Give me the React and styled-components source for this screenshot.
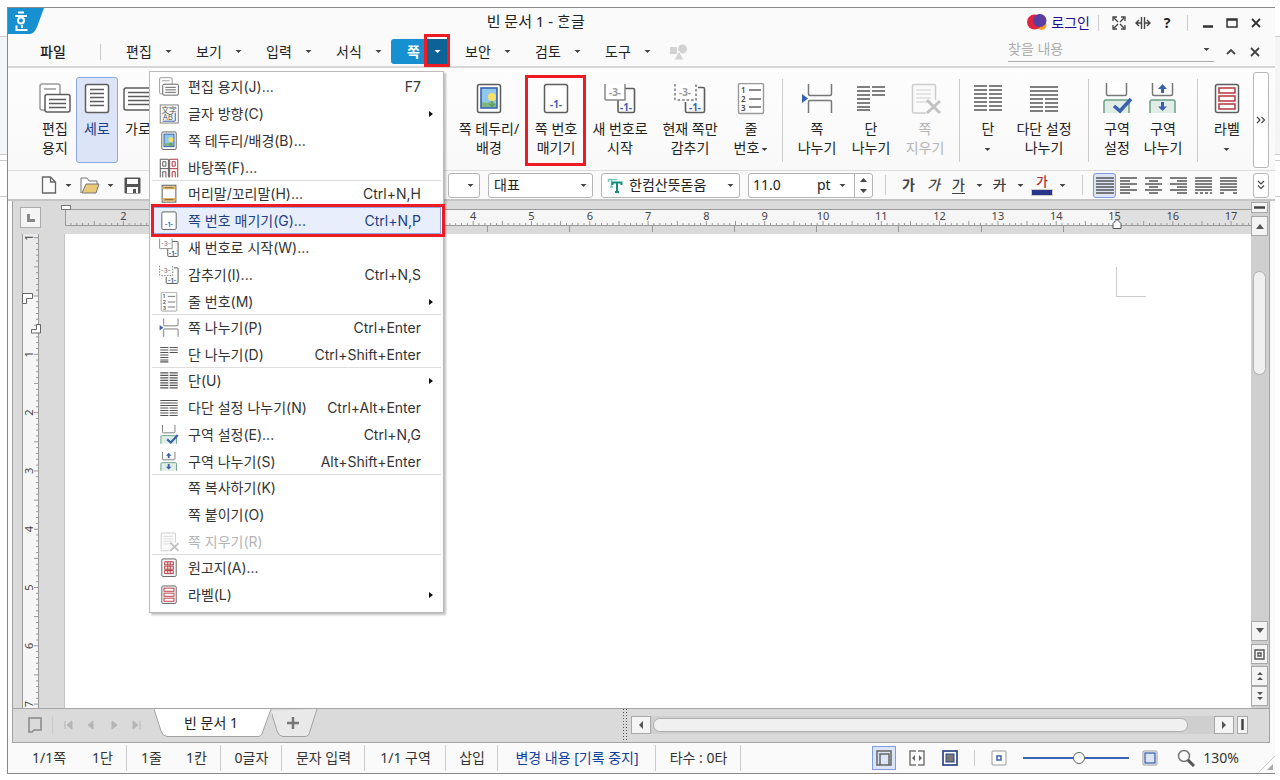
import React, { useEffect, useState } from 'react';
import styled, { createGlobalStyle, css } from 'styled-components';

const GlobalStyle = createGlobalStyle`
  * {
    box-sizing: border-box;
  }

  body {
    margin: 0;
    background: #fff;
    color: #222;
    font-family: 'Noto Sans', 'Noto Sans CJK KR', sans-serif;
    font-size: 14px;
    line-height: 20px;
  }

  button, input, select {
    margin: 0;
    padding: 0;
    border: 0;
    border-radius: 0;
    background: none;
    color: inherit;
    font: inherit;
  }

  svg {
    display: block;
    flex: none;
  }
`;

const Desktop = styled.div`
  display: flex;
  height: 100vh;
  padding: 7px 5px 6px 7px;
  background: linear-gradient(
    #fff 36px, #ccc 36px, #ccc 37px, #f4f5f7 37px, #f4f5f7 154px,
    #ccc 154px, #ccc 155px, #fff 155px, #fff 160px, #ccc 160px, #ccc 161px,
    #fff 161px, #fff 196px, #ccc 196px, #ccc 197px, #fff 197px
  );
`;

const AppWindow = styled.div`
  position: relative;
  display: flex;
  flex: 1;
  flex-direction: column;
  min-width: 0;
  border: 1px solid #888;
  border-right: 0;
  background: #fafafa;
`;

const redFrame = css`
  content: '';
  position: absolute;
  border: 3px solid #ed1c24;
  pointer-events: none;
`;

/* title bar */

const TitleBar = styled.header`
  display: flex;
  align-items: center;
  height: 29px;
  padding-right: 7px;
`;

const LogoButton = styled.button`
  align-self: flex-start;
`;

const Title = styled.h1`
  flex: 1;
  margin: 0;
  font-size: 15px;
  font-weight: 400;
  line-height: 26px;
  text-align: center;
  align-self: flex-start;
`;

const LoginLink = styled.a`
  display: flex;
  align-items: center;
  gap: 4px;
  color: #1a0d91;
  text-decoration: none;
`;

const IconButton = styled.button`
  display: flex;
  align-items: center;
  justify-content: center;
  width: ${(p) => p.$w || 24}px;
  height: 24px;
`;

const Divider = styled.span`
  flex: none;
  width: 1px;
  height: ${(p) => p.$h || 16}px;
  margin: 0 ${(p) => p.$r || p.$m || 8}px 0 ${(p) => p.$m || 8}px;
  background: #ccc;
`;

/* menu bar */

const MenuBar = styled.nav`
  display: flex;
  align-items: center;
  height: 31px;
  padding: 0 8px 0 22px;
  border-bottom: 2px solid #d6d6d6;
`;

const FileButton = styled.button`
  width: 46px;
  font-weight: 500;
`;

const MenuButton = styled.button`
  display: flex;
  align-items: center;
  justify-content: space-between;
  width: 62px;
  height: 24px;
  margin-right: 8px;
  padding: 0 8px;
`;

const ActiveMenu = styled.div`
  display: flex;
  height: 25px;
  margin: 0 10px 0 -7px;
  color: #fff;
`;

const ActiveMenuButton = styled.button`
  width: 36px;
  padding-left: 9px;
  border-radius: 3px 0 0 3px;
  background: #1790d2;
  font-weight: 700;
`;

const ActiveMenuArrow = styled.button`
  position: relative;
  display: flex;
  align-items: center;
  justify-content: center;
  width: 20px;
  background: #0d6396;

  &::after {
    ${redFrame}
    inset: -5px -3px -3px;
  }
`;

const SearchBox = styled.label`
  display: flex;
  align-items: center;
  width: 206px;
  height: 24px;
  margin: 0 5px 4px auto;
  padding-right: 4px;
  border-bottom: 1px solid #aaa;
`;

const SearchInput = styled.input`
  flex: 1;
  min-width: 0;
  outline: 0;

  &::placeholder {
    color: #adadad;
  }
`;

/* ribbon */

const Ribbon = styled.div`
  display: flex;
  align-items: center;
  height: 103px;
  padding: 2px 6px 0 26px;
  border-bottom: 1px solid #dcdcdc;
  background: linear-gradient(#fdfdfd, #f9f9f9);
`;

const RibbonButton = styled.button`
  position: relative;
  display: flex;
  flex: none;
  flex-direction: column;
  align-items: center;
  width: ${(p) => p.$w}px;
  height: 86px;
  padding-top: 5px;
  border: 1px solid ${(p) => (p.$active ? '#8ea9de' : 'transparent')};
  border-radius: 3px;
  background: ${(p) => (p.$active ? '#dce4f7' : 'transparent')};
  color: ${(p) => (p.$active ? '#1c3f86' : 'inherit')};
  line-height: 19px;
  white-space: nowrap;

  &:disabled {
    color: #b5b5b5;
  }

  ${(p) => p.$framed && css`
    &::after {
      ${redFrame}
      inset: -3px 1px -4px 0;
    }
  `}
`;

const RibbonLabel = styled.span`
  display: flex;
  flex-direction: column;
  align-items: center;
  margin-top: 4px;
`;

const RibbonLine = styled.span`
  display: flex;
  align-items: center;
  gap: 2px;
  height: 19px;

  svg {
    margin-top: 4px;
  }
`;

const CoveredGroup = styled.div`
  width: 296px;
`;

const MoreButton = styled.button`
  display: flex;
  align-items: center;
  justify-content: center;
  width: 16px;
  height: ${(p) => p.$h}px;
  margin-left: auto;
  border: 1px solid #b9b9b9;
  border-radius: 3px;
  background: #fff;
`;

/* format toolbar */

const Toolbar = styled.div`
  display: flex;
  align-items: center;
  height: 30px;
  padding: 0 6px 0 30px;
  border-bottom: 2px solid #c4c4c4;
`;

const FileTools = styled.div`
  display: flex;
  align-items: center;
  width: 410px;
`;

const SelectBox = styled.label`
  position: relative;
  display: flex;
  align-items: center;
  width: ${(p) => p.$w}px;
  height: 25px;
  margin-right: 8px;
  padding: 0 5px;
  border: 1px solid #b5b5b5;
  border-radius: 3px;
  background: #fff;
  gap: 6px;
`;

const Select = styled.select`
  flex: 1;
  min-width: 0;
  appearance: none;
  outline: 0;
`;

const SizeBox = styled.div`
  display: flex;
  align-items: center;
  width: 125px;
  height: 25px;
  padding-left: 4px;
  border: 1px solid #b5b5b5;
  border-radius: 3px;
  background: #fff;
`;

const SizeInput = styled.input`
  width: 64px;
  outline: 0;
`;

const Spinner = styled.div`
  display: flex;
  flex-direction: column;
  justify-content: space-evenly;
  align-items: center;
  width: 18px;
  height: 100%;
  margin-left: auto;
  border-left: 1px solid #b5b5b5;
`;

const StepButton = styled.button`
  display: flex;
  align-items: center;
  justify-content: center;
  width: 16px;
  height: 10px;
`;

const StyleButton = styled.button`
  width: 25px;
  height: 24px;
  color: #444;
  font-weight: ${(p) => (p.$bold ? 700 : 500)};
  font-style: ${(p) => (p.$italic ? 'italic' : 'normal')};
  text-decoration: ${(p) => p.$line || 'none'};
  text-underline-offset: 3px;
`;

const ColorButton = styled.button`
  display: flex;
  flex-direction: column;
  align-items: center;
  width: 20px;
  margin-left: 4px;
  color: #b12e34;
  font-size: 13px;
  font-weight: 500;
  line-height: 15px;

  &::after {
    content: '';
    width: 20px;
    height: 5px;
    border: 1px solid #ccc;
    background: #27348b;
  }
`;

const AlignButton = styled.button`
  display: flex;
  align-items: center;
  justify-content: center;
  width: ${(p) => (p.$active ? 23 : 25)}px;
  height: 25px;
  border: 1px solid ${(p) => (p.$active ? '#7f9ddb' : 'transparent')};
  border-radius: 3px;
  background: ${(p) => (p.$active ? '#dce4f7' : 'transparent')};
`;

/* workspace */

const Workspace = styled.main`
  display: grid;
  flex: 1;
  grid-template-columns: 52px minmax(0, 1fr) 18px;
  min-height: 0;
  margin: 0 5px 0 4px;
  border: solid #a3a3a3;
  border-width: 0 1px 1px;
  background: #dadada;
`;

const LeftColumn = styled.div`
  display: flex;
  flex-direction: column;
  min-height: 0;
`;

const CornerCell = styled.div`
  height: 33px;
  padding: 6px 7px;
`;

const TabStopButton = styled.button`
  display: flex;
  align-items: center;
  justify-content: center;
  width: 21px;
  height: 21px;
  border: 1px solid #aaa;
  background: #f4f4f4;
`;

const VerticalRuler = styled.div`
  flex: 1;
  min-height: 0;
  margin-left: 9px;
  overflow: hidden;
`;

const CenterColumn = styled.div`
  position: relative;
  display: flex;
  flex-direction: column;
  min-width: 0;
  min-height: 0;
`;

const HorizontalRuler = styled.div`
  height: 33px;
  padding-top: 8px;
  overflow: hidden;
`;

const IndentMarker = styled.span`
  position: absolute;
  top: 4px;
  left: -4px;
  width: 10px;
  height: 5px;
  border: 1px solid #777;
  background: #fff;
`;

const Paper = styled.section`
  position: relative;
  flex: 1;
  background: #fff;
  box-shadow: -1px 0 #c4c4c4;
`;

const MarginCorner = styled.span`
  position: absolute;
  top: 33px;
  right: 105px;
  width: 30px;
  height: 30px;
  border: solid #ccc;
  border-width: 0 0 1px 1px;
`;

const ScrollColumn = styled.div`
  display: flex;
  flex-direction: column;
  align-items: flex-start;
  padding-bottom: 2px;
  background: #cfcfcf;
`;

const ScrollButton = styled.button`
  display: flex;
  flex: none;
  align-items: center;
  justify-content: center;
  width: ${(p) => p.$w || 17}px;
  height: ${(p) => p.$h || 20}px;
  margin-top: ${(p) => p.$gap || 0}px;
  border: 1px solid #a8a8a8;
  background: #f4f4f4;
`;

const VerticalTrack = styled.div`
  flex: 1;
  padding: 35px 2px 0;
`;

const VerticalThumb = styled.div`
  width: 13px;
  height: 104px;
  border: 1px solid #b0b0b0;
  border-radius: 7px;
  background: #f0f0f0;
`;

/* document tabs */

const TabBar = styled.div`
  display: flex;
  align-items: center;
  height: 34px;
  margin: 0 5px 0 4px;
  padding: 0 21px 2px 15px;
  border: solid #a3a3a3;
  border-width: 0 1px 1px;
  background: #dadada;
`;

const DocumentTab = styled.button`
  position: relative;
  align-self: flex-start;
  width: ${(p) => p.$w}px;
  height: 28px;
  margin-left: ${(p) => p.$gap || 0}px;
`;

const TabShape = styled.svg`
  position: absolute;
  inset: 0;
`;

const TabText = styled.span`
  position: relative;
  display: flex;
  justify-content: center;
  padding-right: 4px;
`;

const Splitter = styled.div`
  width: 5px;
  height: 33px;
  margin: 0 4px 0 auto;
  background: radial-gradient(#555 1px, transparent 1px) 0 0 / 3px 3px;
`;

const HorizontalScroll = styled.div`
  display: flex;
  align-items: center;
  width: 50%;
  max-width: 603px;
  height: 18px;
  margin-right: 3px;
  background: #cfcfcf;
`;

const HorizontalThumb = styled.div`
  flex: 1;
  height: 14px;
  margin: 0 26px 0 2px;
  border: 1px solid #b0b0b0;
  border-radius: 7px;
  background: #f0f0f0;
`;

/* status bar */

const StatusBar = styled.footer`
  display: flex;
  align-items: center;
  height: 30px;
  padding: 0 0 1px 10px;
  color: #333;
  white-space: nowrap;
`;

const StatusItem = styled.span`
  display: flex;
  justify-content: ${(p) => (p.$pair ? 'space-between' : 'center')};
  width: ${(p) => p.$w}px;
  height: 26px;
  padding: 0 13px 0 14px;
  border-right: 1px solid #ccc;
  color: ${(p) => (p.$link ? '#103f9c' : 'inherit')};
  line-height: 26px;
`;

const ViewTools = styled.div`
  display: flex;
  align-items: center;
  align-self: stretch;
  margin-left: auto;
`;

const ViewButton = styled.button`
  display: flex;
  align-items: center;
  justify-content: center;
  width: 24px;
  height: 24px;
  margin-right: ${(p) => p.$gap || 0}px;
  border: 1px solid ${(p) => (p.$active ? '#7f9ddb' : 'transparent')};
  background: ${(p) => (p.$active ? '#dce4f7' : 'transparent')};
`;

const ZoomSlider = styled.input`
  width: 106px;
  height: 14px;
  margin: 0 9px 0 12px;
  appearance: none;

  &::-webkit-slider-runnable-track {
    height: 2px;
    background: #3b62b5;
  }

  &::-webkit-slider-thumb {
    width: 12px;
    height: 12px;
    margin-top: -5px;
    appearance: none;
    border: 1px solid #666;
    border-radius: 50%;
    background: #fff;
  }
`;

const Grip = styled.svg`
  align-self: flex-end;
  margin-left: 20px;
`;

/* drop-down menu */

const PageMenu = styled.ul`
  position: absolute;
  top: 63px;
  left: 141px;
  z-index: 2;
  width: 295px;
  margin: 0;
  padding: 1px 2px 4px;
  border: 1px solid #bbb;
  background: #fff;
  box-shadow: 2px 2px 2px rgba(0, 0, 0, 0.25);
  list-style: none;
`;

const MenuItem = styled.li`
  position: relative;

  ${(p) => p.$framed && css`
    &::after {
      ${redFrame}
      inset: -3px -4px -3px -1px;
    }
  `}
`;

const MenuSeparator = styled.li`
  height: 1px;
  margin: -1px 0;
  background: #dedede;
`;

const MenuCommand = styled.button`
  display: flex;
  align-items: center;
  width: 100%;
  height: 27px;
  padding: 0 5px 0 6px;
  border: 1px solid ${(p) => (p.$selected ? '#8ea9de' : 'transparent')};
  background: ${(p) => (p.$selected ? '#e8eefb' : 'transparent')};
  color: ${(p) => (p.$selected ? '#1c3f86' : '#333')};
  font-family: Inter, 'Noto Sans CJK KR', sans-serif;
  white-space: nowrap;

  &:disabled {
    color: #b5b5b5;
  }
`;

const MenuIcon = styled.span`
  width: 22px;
  height: 20px;
  margin-right: 7px;
`;

const Shortcut = styled.span`
  margin-left: auto;
`;

const SubmenuSlot = styled.span`
  display: flex;
  justify-content: flex-end;
  width: 14px;
  margin-left: ${(p) => (p.$alone ? 'auto' : 0)};
`;

/* drawings */

const Arrow = ({ color = '#444', up }) => (
  <svg width="7" height="4" viewBox="0 0 7 4">
    <path d={up ? 'M0 4h7L3.5 0z' : 'M0 0h7L3.5 4z'} fill={color} />
  </svg>
);

const DropArrow = ({ color = '#444' }) => (
  <svg width="7" height="5" viewBox="0 0 7 5">
    <path d="M.5 1h6L3.5 4z" fill={color} />
  </svg>
);

const GRAY = '#5c5c5c';
const BLUE = '#3a61ae';
const RED = '#b3363c';
const GREEN = '#6b9f86';

const lines = (x1, x2, ys) => ys.map((y) => `M${x1} ${y}H${x2}`).join('');

const sheet = (
  <rect x="4.5" y="1.5" width="23" height="28" rx="2" fill="#fff" stroke={GRAY} strokeWidth="1.5" />
);

const PageMark = ({ x, y, text, color = BLUE }) => (
  <text x={x} y={y} textAnchor="middle" fontSize="10" fontWeight="700" fill={color} stroke="none">{text}</text>
);

const drawings = {
  paper: (
    <g stroke={GRAY} strokeWidth="1.5" fill="#fff">
      <rect x="1" y="1" width="20" height="26" rx="2" stroke="#999" />
      <path d="M5 6h12" stroke="#999" />
      <rect x="6" y="11.5" width="25" height="17.5" rx="2" />
      <path d={lines(10, 27, [16.5, 20.5, 24.5])} />
    </g>
  ),
  portrait: <>{sheet}<path d={lines(9, 23, [6.5, 10.5, 14.5, 18.5, 22.5])} stroke={GRAY} strokeWidth="1.3" /></>,
  landscape: (
    <g stroke={GRAY} strokeWidth="1.5" fill="#fff">
      <rect x="2" y="5" width="29" height="22" rx="2" />
      <path d={lines(6, 27, [9.5, 13.5, 17.5, 21.5])} />
    </g>
  ),
  background: (
    <>
      {sheet}
      <rect x="8" y="5" width="16" height="20" fill="#8fc8ec" stroke="#3a61ae" strokeWidth="1.6" />
      <path d="M9 24V19l5 1 5-2 4 3v3z" fill="#7fb77c" />
      <circle cx="19" cy="14" r="4" fill="#f6e06a" />
      <path d="M19 18v6M16 21l3 2 3-2" stroke="#4f9468" fill="none" />
    </>
  ),
  pageNumber: <>{sheet}<PageMark x="16" y="25" text="-1-" /></>,
  newNumber: (
    <>
      <path d="M21 5.5h8q1.500 0 1.500 1.500v21q0 1.500-1.500 1.500H15.500q-1.500 0-1.500-1.500V17" fill="none" stroke={GRAY} strokeWidth="1.6" />
      <path d="M1 1v15q0 1 1 1h19V1" fill="#fff" stroke="#888" strokeWidth="1.5" />
      <PageMark x="11" y="13" text="-3-" color="#999" />
      <PageMark x="22" y="28" text="-1-" />
    </>
  ),
  hide: (
    <>
      <path d="M24 4.500h5q1.500 0 1.500 1.500v22q0 1.500-1.500 1.500H13q-1.500 0-1.500-1.500V19" fill="none" stroke={GRAY} strokeWidth="1.6" />
      <path d="M1 1v15q0 1 1 1h20V1" fill="#fff" stroke="#777" strokeWidth="1.5" strokeDasharray="2.500 2" />
      <PageMark x="11" y="13" text="-3-" color="#999" />
      <PageMark x="21" y="28" text="-1-" />
    </>
  ),
  lineNumber: (
    <>
      <rect x="3.500" y=".5" width="25" height="30" rx="1.500" fill="#fff" stroke="#999" strokeWidth="1.4" />
      <path d={lines(14, 26, [7, 16, 24])} stroke="#666" strokeWidth="1.4" />
      {[1, 2, 3].map((n) => (
        <text key={n} x="6" y={n * 9 + 1} fontSize="8" fontWeight="600" fill="#444">{n}</text>
      ))}
    </>
  ),
  pageBreak: (
    <>
      <path d="M7.500 1v10q0 1.500 1.500 1.500h20q1.500 0 1.500-1.500V1M7.500 30V19q0-1.500 1.500-1.500h20q1.500 0 1.500 1.500v11" fill="none" stroke="#777" strokeWidth="1.5" />
      <path d="M1 11l6 4.500L1 20z" fill={BLUE} />
    </>
  ),
  columnBreak: <path d={lines(2, 15, [4, 8, 12, 16, 20, 24, 27]) + lines(17, 30, [4, 8, 12])} stroke="#555" strokeWidth="1.7" />,
  deletePage: (
    <g stroke="#ccc" strokeWidth="1.5" fill="none">
      <path d="M17 30H5q-1.500 0-1.500-1.500V3q0-1.500 1.500-1.500h20q1.500 0 1.500 1.500v14" fill="#fafafa" />
      <path d={lines(7, 22, [7, 11, 15, 19])} stroke="#ddd" />
      <path d="M18 17l13 13M31 18L18 30" strokeWidth="3" stroke="#c2c2c2" />
    </g>
  ),
  columns: <path d={lines(2, 15, [3, 7, 11, 15, 19, 23, 27]) + lines(17, 30, [3, 7, 11, 15, 19, 23, 27])} stroke="#555" strokeWidth="1.7" />,
  multiColumn: <path d={lines(2, 30, [4, 8, 12]) + lines(2, 15, [16, 20, 24, 28]) + lines(17, 30, [16, 20, 24, 28])} stroke="#555" strokeWidth="1.7" />,
  sectionSet: (
    <>
      <path d="M5.500 0v11q0 1.500 1.500 1.500h17q1.500 0 1.500-1.500V0" fill="#fff" stroke="#777" strokeWidth="1.5" />
      <path d="M3 30V19q0-2 2-2h21q2 0 2 2v11" fill="#e0ede6" stroke={GREEN} strokeWidth="1.5" />
      <path d="M13 23l6 5 11-12" fill="none" stroke={BLUE} strokeWidth="3.5" />
    </>
  ),
  sectionBreak: (
    <>
      <path d="M5.500 0v11q0 1.500 1.500 1.500h17q1.500 0 1.500-1.500V0" fill="none" stroke="#777" strokeWidth="1.500" />
      <path d="M3 30V19q0-2 2-2h21q2 0 2 2v11" fill="#e0ede6" stroke={GREEN} strokeWidth="1.5" />
      <path d="M15.500 1l4.500 5h-3v4h-3V6h-3zM15.500 28l4.500-4.500h-3V19h-3v4.500h-3z" fill={BLUE} />
    </>
  ),
  label: (
    <>
      {sheet}
      <g fill="#fff" stroke={RED} strokeWidth="1.5">
        <rect x="8" y="5" width="16" height="5" />
        <rect x="8" y="13" width="16" height="5" />
        <rect x="8" y="21" width="16" height="5" />
      </g>
    </>
  ),
  manuscript: (
    <>
      {sheet}
      <path d="M9 6h14v5H9zM9 13h14v5H9zM9 20h14v5H9zM14 6v5M18 6v5M14 13v5M18 13v5M14 20v5M18 20v5" fill="#fbe6e6" stroke={RED} strokeWidth="1.5" />
    </>
  ),
  headerFooter: (
    <>
      <rect x="5" y="2" width="22" height="27" fill="#fff" stroke={GRAY} strokeWidth="1.6" />
      <path d="M6 6h20M6 25h20" stroke="#e0b863" strokeWidth="5" />
      <path d="M9 6h14M9 25h14" stroke="#7e6b45" strokeWidth="1.6" />
    </>
  ),
  masterPage: (
    <g fill="none" strokeWidth="1.6">
      <path d="M2 31V2h13v29M2 17h13M6 6h5v7H6zM6 31v-9h5v9" stroke={GRAY} />
      <path d="M17 31V2h13v29M17 17h13M21 6h5v7h-5zM21 31v-9h5v9" stroke={RED} />
    </g>
  ),
  textDirection: (
    <>
      <rect x="2" y="1.500" width="29" height="29" fill="#f6f6f6" stroke="#888" strokeWidth="1.6" />
      <text x="16" y="14" textAnchor="middle" fontSize="12" fill="#555">文字</text>
      <text x="14" y="25" textAnchor="middle" fontSize="12" fill="#555">AB</text>
      <path d="M6 27.500h20M26 14v13" stroke={BLUE} strokeWidth="1.6" />
    </>
  ),
};

const Drawing = ({ name, size = 32 }) => (
  <svg width={size} height={size} viewBox="0 0 32 32">{drawings[name]}</svg>
);

const Stroked = ({ w = 16, h = 16, d, color = '#444', width = 1.5 }) => (
  <svg width={w} height={h} viewBox={`0 0 ${w} ${h}`}>
    <path d={d} fill="none" stroke={color} strokeWidth={width} />
  </svg>
);

const Filled = ({ w = 16, h = 16, d, color = '#555' }) => (
  <svg width={w} height={h} viewBox={`0 0 ${w} ${h}`}>
    <path d={d} fill={color} />
  </svg>
);

const Logo = () => (
  <svg width="36" height="26" viewBox="0 0 36 26">
    <path d="M0 0h36l-7 19q-3 7-7 7H0z" fill="#1790d2" />
    <g fill="none" stroke="#fff" strokeWidth="2">
      <path d="M10 4.500h6M7 8h12M8.500 17.500v4.500h11M14 17v3" />
      <circle cx="13" cy="12.500" r="3" />
    </g>
  </svg>
);

const CM = 58.3;

const numbersFrom = (first, last) =>
  Array.from({ length: Math.max(0, last - first + 1) }, (_, i) => first + i);

const HorizontalScale = ({ last }) => {
  const zero = 175;
  const ticks = [];
  for (let mm = -29; mm < 400; mm += 1) {
    const top = mm % 5 === 0 ? 12 : 14;
    ticks.push(`M${(zero + (mm * CM) / 10).toFixed(1)} ${top}V16`);
  }
  return (
    <svg width="100%" height="25">
      <rect width="100%" height="16" fill="#e0e0e0" />
      <rect x={zero} width={15 * CM} height="16" fill="#f6f6f6" />
      <path d="M0 .5H3000M0 16.500H3000M.5 0V16" stroke="#999" />
      <path d={ticks.join('')} stroke="#999" />
      {numbersFrom(-2, last).map((n) => (
        <text key={n} x={zero + n * CM} y="11" textAnchor="middle" fontSize="11" fill="#444">{Math.abs(n)}</text>
      ))}
      {numbersFrom(0, 10).map((n) => (
        <path key={n} d={`M${Math.round(zero + n * 82.3)}.5 17v6`} stroke="#999" />
      ))}
      <path d="M1048 19.500v-5l4-4 4 4v5z" fill="#fff" stroke="#555" />
    </svg>
  );
};

const VerticalScale = ({ last }) => {
  const zero = 62;
  const ticks = [];
  for (let mm = -10; mm < 300; mm += 1) {
    const left = mm % 5 === 0 ? 12 : 14;
    ticks.push(`M${left} ${(zero + (mm * CM) / 10).toFixed(1)}H16`);
  }
  return (
    <svg width="21" height="1800">
      <rect width="16" height="1800" fill="#f6f6f6" />
      <rect width="16" height={zero} fill="#ebebeb" />
      <path d="M.5 0V1800M16.500 0V1800" stroke="#999" />
      <path d={ticks.join('')} stroke="#999" />
      {numbersFrom(-1, last).map((n) => (
        <text
          key={n}
          transform={`translate(11 ${zero + n * CM}) rotate(-90)`}
          textAnchor="middle"
          fontSize="11"
          fill="#444"
        >
          {Math.abs(n)}
        </text>
      ))}
      <path d="M.5 59.500h10v5h-6v5h-4z" fill="#fff" stroke="#666" />
      <path d="M18.500 90.500h-4v5h-5v3.500h9z" fill="#fff" stroke="#666" />
    </svg>
  );
};

/* data */

const menusBefore = ['편집', '보기', '입력', '서식'];
const menusAfter = ['보안', '검토', '도구'];

const ribbonItems = [
  { icon: 'background', text: ['쪽 테두리/', '배경'], w: 70 },
  { icon: 'pageNumber', text: ['쪽 번호', '매기기'], w: 64, framed: true },
  { icon: 'newNumber', text: ['새 번호로', '시작'], w: 64 },
  { icon: 'hide', text: ['현재 쪽만', '감추기'], w: 76 },
  { icon: 'lineNumber', text: ['줄', '번호'], w: 46, drop: true },
  null,
  { icon: 'pageBreak', text: ['쪽', '나누기'], w: 52 },
  { icon: 'columnBreak', text: ['단', '나누기'], w: 56 },
  { icon: 'deletePage', text: ['쪽', '지우기'], w: 52, disabled: true },
  null,
  { icon: 'columns', text: ['단', ''], w: 40, drop: true },
  { icon: 'multiColumn', text: ['다단 설정', '나누기'], w: 72 },
  null,
  { icon: 'sectionSet', text: ['구역', '설정'], w: 40 },
  { icon: 'sectionBreak', text: ['구역', '나누기'], w: 52 },
  null,
  { icon: 'label', text: ['라벨', ''], w: 42, drop: true },
];

const menuItems = [
  { icon: 'paper', text: '편집 용지(J)...', keys: 'F7' },
  { icon: 'textDirection', text: '글자 방향(C)', sub: true },
  { icon: 'background', text: '쪽 테두리/배경(B)...' },
  { icon: 'masterPage', text: '바탕쪽(F)...' },
  null,
  { icon: 'headerFooter', text: '머리말/꼬리말(H)...', keys: 'Ctrl+N,H' },
  { icon: 'pageNumber', text: '쪽 번호 매기기(G)...', keys: 'Ctrl+N,P', selected: true },
  { icon: 'newNumber', text: '새 번호로 시작(W)...' },
  { icon: 'hide', text: '감추기(I)...', keys: 'Ctrl+N,S' },
  { icon: 'lineNumber', text: '줄 번호(M)', sub: true },
  null,
  { icon: 'pageBreak', text: '쪽 나누기(P)', keys: 'Ctrl+Enter' },
  { icon: 'columnBreak', text: '단 나누기(D)', keys: 'Ctrl+Shift+Enter' },
  null,
  { icon: 'columns', text: '단(U)', sub: true },
  { icon: 'multiColumn', text: '다단 설정 나누기(N)', keys: 'Ctrl+Alt+Enter' },
  { icon: 'sectionSet', text: '구역 설정(E)...', keys: 'Ctrl+N,G' },
  { icon: 'sectionBreak', text: '구역 나누기(S)', keys: 'Alt+Shift+Enter' },
  null,
  { text: '쪽 복사하기(K)' },
  { text: '쪽 붙이기(O)' },
  { icon: 'deletePage', text: '쪽 지우기(R)', disabled: true },
  null,
  { icon: 'manuscript', text: '원고지(A)...' },
  { icon: 'label', text: '라벨(L)', sub: true },
];

const aligns = [
  ['양쪽 정렬', lines(0, 18, [2, 5, 8, 11, 14, 17])],
  ['왼쪽 정렬', lines(0, 17, [2, 8, 14]) + lines(0, 10, [5, 11, 17])],
  ['가운데 정렬', lines(0, 17, [2, 8, 14]) + lines(4, 13, [5, 11, 17])],
  ['오른쪽 정렬', lines(0, 17, [2, 8, 14]) + lines(7, 17, [5, 11, 17])],
  ['배분 정렬', `${lines(0, 17, [2, 5, 8, 11, 14])}M0 17h3M5 17h3M10 17h3M15 17h2`],
  ['나눔 정렬', `${lines(0, 17, [2, 5, 8, 11, 14])}M0 17h4M13 17h4`],
];

const tabMoves = [
  ['처음', 'M5 4v8M12 4v8l-5-4z'],
  ['이전', 'M10 4v8L5 8z'],
  ['다음', 'M6 4v8l5-4z'],
  ['마지막', 'M4 4v8l5-4zM11 4v8'],
];

function useWindowSize() {
  const [windowSize, setWindowSize] = useState([window.innerWidth, window.innerHeight]);

  useEffect(() => {
    const update = () => setWindowSize([window.innerWidth, window.innerHeight]);
    window.addEventListener('resize', update);
    return () => window.removeEventListener('resize', update);
  }, []);

  return windowSize;
}

function RibbonItem({ item }) {
  return (
    <RibbonButton type="button" $w={item.w} $active={item.active} $framed={item.framed} disabled={item.disabled}>
      <Drawing name={item.icon} />
      <RibbonLabel>
        {item.text.map((line, i) => (
          <RibbonLine key={i}>
            {line}
            {i === 1 && item.drop && <DropArrow />}
          </RibbonLine>
        ))}
      </RibbonLabel>
    </RibbonButton>
  );
}

function PageMenuList() {
  return (
    <PageMenu>
      {menuItems.map((item, i) =>
        item ? (
          <MenuItem key={item.text} $framed={item.selected}>
            <MenuCommand type="button" $selected={item.selected} disabled={item.disabled}>
              <MenuIcon>{item.icon && <Drawing name={item.icon} size={20} />}</MenuIcon>
              {item.text}
              {item.keys && <Shortcut>{item.keys}</Shortcut>}
              <SubmenuSlot $alone={!item.keys}>
                {item.sub && <Filled w={7} h={8} d="M1 1l4 3-4 3z" color="#111" />}
              </SubmenuSlot>
            </MenuCommand>
          </MenuItem>
        ) : (
          <MenuSeparator key={i} />
        )
      )}
    </PageMenu>
  );
}

function App() {
  const [align, setAlign] = useState(0);
  const [size, setSize] = useState('11.0');
  const [zoom, setZoom] = useState(53);
  const [width, height] = useWindowSize();

  return (
    <>
      <GlobalStyle />
      <Desktop>
        <AppWindow>
          <TitleBar>
            <LogoButton type="button" aria-label="창 메뉴"><Logo /></LogoButton>
            <Title>빈 문서 1 - ᄒᆞᆫ글</Title>
            <LoginLink href="#login">
              <svg width="20" height="17" viewBox="0 0 20 17">
                <circle cx="14.500" cy="11" r="5" fill="#f59a23" />
                <circle cx="7.500" cy="8" r="7.500" fill="#e0233f" />
                <rect x="6" y="0" width="13.500" height="13" rx="6.500" fill="#5a3d9e" />
              </svg>
              로그인
            </LoginLink>
            <Divider />
            <IconButton type="button" aria-label="전체 화면">
              <Stroked w={14} h={14} width={1.3} d="M1 5V1h4M9 1h4v4M13 9v4H9M5 13H1V9M2 2l4 4M12 2L8 6M12 12L8 8M2 12l4-4" />
            </IconButton>
            <IconButton type="button" aria-label="창 나누기">
              <Stroked w={16} h={12} width={1.4} d="M6.500 0v12M9.500 0v12M1 6h5M10 6h5M4 3L1 6l3 3M12 3l3 3-3 3" />
            </IconButton>
            <IconButton type="button" aria-label="도움말"><b>?</b></IconButton>
            <Divider />
            <IconButton type="button" aria-label="최소화"><Stroked w={12} h={12} width={2.5} d="M1 9.500h10" color="#333" /></IconButton>
            <IconButton type="button" aria-label="최대화"><Stroked w={12} h={12} d="M1 2h10v8H1zM1 3h10" color="#333" /></IconButton>
            <IconButton type="button" aria-label="닫기"><Stroked w={12} h={12} width={1.8} d="M2 2l8 8M10 2l-8 8" color="#333" /></IconButton>
          </TitleBar>

          <MenuBar>
            <FileButton type="button">파일</FileButton>
            <Divider $m={24} $r={17} />
            {menusBefore.map((name, i) => (
              <MenuButton key={i} type="button">{name}<DropArrow /></MenuButton>
            ))}
            <ActiveMenu>
              <ActiveMenuButton type="button">쪽</ActiveMenuButton>
              <ActiveMenuArrow type="button" aria-label="쪽 메뉴 열기"><DropArrow color="#fff" /></ActiveMenuArrow>
            </ActiveMenu>
            {menusAfter.map((name, i) => (
              <MenuButton key={i} type="button">{name}<DropArrow /></MenuButton>
            ))}
            <IconButton type="button" aria-label="도형">
              <svg width="18" height="16" viewBox="0 0 18 16" fill="#d3d3d3">
                <rect y="3" width="7" height="7" />
                <circle cx="12.500" cy="5" r="4.500" />
                <path d="M9 7l5 9H4z" stroke="#fafafa" />
              </svg>
            </IconButton>
            <SearchBox>
              <SearchInput type="text" placeholder="찾을 내용" aria-label="찾을 내용" />
              <DropArrow />
            </SearchBox>
            <IconButton type="button" aria-label="리본 접기"><Stroked w={12} h={12} width={1.8} d="M2 8l4-4 4 4" /></IconButton>
            <IconButton type="button" aria-label="문서 닫기"><Stroked w={12} h={12} width={1.8} d="M2 2l8 8M10 2l-8 8" /></IconButton>
          </MenuBar>

          <Ribbon>
            <RibbonItem item={{ icon: 'paper', text: ['편집', '용지'], w: 42 }} />
            <RibbonItem item={{ icon: 'portrait', text: ['세로'], w: 42, active: true }} />
            <RibbonItem item={{ icon: 'landscape', text: ['가로'], w: 40 }} />
            <CoveredGroup />
            {ribbonItems.map((item, i) =>
              item ? <RibbonItem key={i} item={item} /> : <Divider key={i} $h={83} />
            )}
            <MoreButton type="button" $h={96} aria-label="더 보기">
              <Stroked w={10} h={8} width={1.2} d="M1 1l3 3-3 3M5.500 1l3 3-3 3" />
            </MoreButton>
          </Ribbon>

          <Toolbar>
            <FileTools>
              <IconButton type="button" $w={22} aria-label="새 문서">
                <Stroked w={16} h={18} width={1.3} d="M1.500 1h8l5 5v11h-13zM9.500 1v5h5" color="#666" />
              </IconButton>
              <IconButton type="button" $w={16} aria-label="새 문서 목록"><DropArrow /></IconButton>
              <IconButton type="button" $w={28} aria-label="열기">
                <svg width="20" height="17" viewBox="0 0 20 17" stroke="#777">
                  <path d="M1 16V1h6l2 3h8v4" fill="#fff" />
                  <path d="M2 16L6 7h13l-3 9z" fill="#e9c878" />
                </svg>
              </IconButton>
              <IconButton type="button" $w={12} aria-label="열기 목록"><DropArrow /></IconButton>
              <IconButton type="button" $w={32} aria-label="저장">
                <svg width="17" height="17" viewBox="0 0 17 17">
                  <rect x=".5" y=".5" width="16" height="16" rx="1" fill="#555" />
                  <path d="M3 2h11v5H3zM3 10h11v6H3z" fill="#fff" />
                  <path d="M9 12h3v4H9z" fill="#555" />
                </svg>
              </IconButton>
            </FileTools>
            <SelectBox $w={32}>
              <Select aria-label="스타일"><option> </option></Select>
              <DropArrow />
            </SelectBox>
            <SelectBox $w={105}>
              <Select aria-label="글꼴 언어"><option>대표</option></Select>
              <DropArrow />
            </SelectBox>
            <SelectBox $w={139}>
              <svg width="16" height="15" viewBox="0 0 16 15" fill="none">
                <path d="M1.500 4V1.500h9M4.500 1v8M3 9h3" stroke="#77c9ba" strokeWidth="1.500" />
                <path d="M5.500 7V4.500h9V7M10 4.500V14M8 14h4" stroke="#0f8f7e" strokeWidth="2" />
              </svg>
              <Select aria-label="글꼴"><option>한컴산뜻돋움</option></Select>
              <DropArrow />
            </SelectBox>
            <SizeBox>
              <SizeInput type="text" aria-label="글자 크기" value={size} onChange={(e) => setSize(e.target.value)} />
              pt
              <IconButton type="button" $w={24} aria-label="글자 크기 목록"><DropArrow /></IconButton>
              <Spinner>
                <StepButton type="button" aria-label="크게"><Arrow up /></StepButton>
                <StepButton type="button" aria-label="작게"><Arrow /></StepButton>
              </Spinner>
            </SizeBox>
            <Divider $h={20} $m={12} $r={10} />
            <StyleButton type="button" $bold aria-label="진하게">가</StyleButton>
            <StyleButton type="button" $italic aria-label="기울임">가</StyleButton>
            <StyleButton type="button" $line="underline" aria-label="밑줄">가</StyleButton>
            <IconButton type="button" $w={16} aria-label="밑줄 목록"><DropArrow /></IconButton>
            <StyleButton type="button" $line="line-through" aria-label="취소선">가</StyleButton>
            <IconButton type="button" $w={16} aria-label="취소선 목록"><DropArrow /></IconButton>
            <ColorButton type="button" aria-label="글자 색">가</ColorButton>
            <IconButton type="button" $w={20} aria-label="글자 색 목록"><DropArrow /></IconButton>
            <Divider $h={20} $m={10} />
            {aligns.map(([name, d], i) => (
              <AlignButton key={i} type="button" aria-label={name} $active={align === i} onClick={() => setAlign(i)}>
                <Stroked w={18} h={19} width={1.5} d={d} color="#555" />
              </AlignButton>
            ))}
            <MoreButton type="button" $h={25} aria-label="도구 더 보기">
              <Stroked w={8} h={10} width={1.2} d="M1 1l3 3 3-3M1 5.500l3 3 3-3" />
            </MoreButton>
          </Toolbar>

          <Workspace>
            <LeftColumn>
              <CornerCell>
                <TabStopButton type="button" aria-label="탭 종류">
                  <Stroked w={10} h={10} width={3} d="M2.500 1v6.500H9" color="#888" />
                </TabStopButton>
              </CornerCell>
              <VerticalRuler><VerticalScale last={Math.floor((height - 368) / CM)} /></VerticalRuler>
            </LeftColumn>
            <CenterColumn>
              <HorizontalRuler><HorizontalScale last={Math.floor((width - 275) / CM)} /></HorizontalRuler>
              <IndentMarker />
              <Paper><MarginCorner /></Paper>
            </CenterColumn>
            <ScrollColumn>
              <ScrollButton type="button" $h={11} $gap={1} aria-label="화면 나누기"><Stroked w={11} h={3} width={2.5} d="M0 1.500h11" /></ScrollButton>
              <ScrollButton type="button" $gap={3} aria-label="위로"><Filled w={10} h={6} d="M1 6l4-5 4 5z" /></ScrollButton>
              <VerticalTrack><VerticalThumb /></VerticalTrack>
              <ScrollButton type="button" aria-label="아래로"><Filled w={10} h={6} d="M1 0l4 5 4-5z" /></ScrollButton>
              <ScrollButton type="button" $gap={3} aria-label="개체 선택">
                <Stroked w={11} h={11} width={1.4} d="M1 1h9v9H1zM4 4h3v3H4z" color="#555" />
              </ScrollButton>
              <ScrollButton type="button" $gap={2} aria-label="이전 쪽"><Filled w={8} h={10} d="M1 4l3-3 3 3zM1 9l3-3 3 3z" /></ScrollButton>
              <ScrollButton type="button" aria-label="다음 쪽"><Filled w={8} h={10} d="M1 1l3 3 3-3zM1 6l3 3 3-3z" /></ScrollButton>
            </ScrollColumn>
          </Workspace>

          <TabBar>
            <IconButton type="button" $w={14} aria-label="문서 목록">
              <Stroked w={14} h={16} d="M1 1h12v12H6l-2 2H1z" color="#888" />
            </IconButton>
            <Divider $h={18} $m={10} $r={3} />
            {tabMoves.map(([name, d], i) => (
              <IconButton key={i} type="button" $w={23} aria-label={name}>
                <svg width="16" height="16" viewBox="0 0 16 16"><path d={d} fill="#b5b5b5" stroke="#b5b5b5" /></svg>
              </IconButton>
            ))}
            <DocumentTab type="button" $w={118} $gap={6}>
              <TabShape width="118" height="28" viewBox="0 0 118 28">
                <path d="M0 0l7 22q2 5.500 6 5.500h91q4 0 5-5.500L117 0" fill="#fff" stroke="#a3a3a3" />
              </TabShape>
              <TabText>빈 문서 1</TabText>
            </DocumentTab>
            <DocumentTab type="button" $w={46} aria-label="새 탭">
              <TabShape width="46" height="28" viewBox="0 0 46 28">
                <path d="M-1 2l6 20q2 5.500 6 5.500h22q4 0 5-5.500L45 0" fill="#e9e9e9" stroke="#a3a3a3" />
                <path d="M21 8v12M15 14h12" stroke="#777" strokeWidth="2.5" />
              </TabShape>
            </DocumentTab>
            <Splitter />
            <HorizontalScroll>
              <ScrollButton type="button" $w={20} $h={18} aria-label="왼쪽으로"><Filled w={6} h={8} d="M5 0v8L1 4z" /></ScrollButton>
              <HorizontalThumb />
              <ScrollButton type="button" $w={20} $h={18} aria-label="오른쪽으로"><Filled w={6} h={8} d="M1 0v8l4-4z" /></ScrollButton>
            </HorizontalScroll>
            <ScrollButton type="button" $w={11} $h={18} aria-label="세로 나누기"><Stroked w={3} h={11} width={2.5} d="M1.500 0v11" /></ScrollButton>
          </TabBar>

          <StatusBar>
            <StatusItem $w={109} $pair><span>1/1쪽</span><span>1단</span></StatusItem>
            <StatusItem $w={94} $pair><span>1줄</span><span>1칸</span></StatusItem>
            <StatusItem $w={61}>0글자</StatusItem>
            <StatusItem $w={83}>문자 입력</StatusItem>
            <StatusItem $w={81}>1/1 구역</StatusItem>
            <StatusItem $w={52}>삽입</StatusItem>
            <StatusItem $w={158} $link>변경 내용 [기록 중지]</StatusItem>
            <StatusItem $w={85}>타수 : 0타</StatusItem>
            <ViewTools>
              <ViewButton type="button" $active $gap={9} aria-label="쪽 윤곽">
                <Stroked w={16} h={16} d="M1 1h14v14H1zM4 15V4h9v11" color="#666" />
              </ViewButton>
              <ViewButton type="button" $gap={9} aria-label="폭 맞춤">
                <svg width="16" height="16" viewBox="0 0 16 16">
                  <path d="M7 1H1v14h6M9 1h6v14H9" fill="none" stroke="#777" strokeWidth="1.500" />
                  <path d="M6 5v6L3 8zM10 5v6l3-3z" fill="#666" />
                </svg>
              </ViewButton>
              <ViewButton type="button" $gap={4} aria-label="쪽 맞춤">
                <svg width="16" height="16" viewBox="0 0 16 16">
                  <rect x="1" y="1" width="14" height="14" fill="#fff" stroke="#2c4583" strokeWidth="1.700" />
                  <rect x="4" y="4" width="8" height="8" fill="#777" stroke="#2c4583" />
                </svg>
              </ViewButton>
              <Divider $m={8} $r={12} />
              <ViewButton type="button" aria-label="축소">
                <svg width="16" height="16" viewBox="0 0 16 16" fill="#fff">
                  <rect x="1" y="1" width="14" height="14" rx="1" stroke="#999" />
                  <rect x="6" y="6" width="4" height="4" stroke={BLUE} strokeWidth="1.500" />
                </svg>
              </ViewButton>
              <ZoomSlider type="range" min="0" max="100" value={zoom} onChange={(e) => setZoom(e.target.value)} aria-label="확대 비율" />
              <ViewButton type="button" $gap={12} aria-label="확대">
                <svg width="16" height="16" viewBox="0 0 16 16" fill="#fff">
                  <rect x="1" y="1" width="14" height="14" rx="1" stroke="#999" />
                  <rect x="3" y="3" width="10" height="10" fill="#dce4f7" stroke={BLUE} strokeWidth="1.300" />
                </svg>
              </ViewButton>
              <ViewButton type="button" $gap={5} aria-label="돋보기">
                <svg width="18" height="18" viewBox="0 0 18 18" fill="none">
                  <circle cx="7" cy="7" r="5.500" stroke="#777" strokeWidth="1.500" />
                  <path d="M11 11l6 6" stroke="#555" strokeWidth="3" />
                </svg>
              </ViewButton>
              130%
              <Grip width="16" height="16" viewBox="0 0 16 16">
                <path d="M0 16L16 0" stroke="#ccc" />
                <path d="M8 14h6V8z" fill="#aaa" />
              </Grip>
            </ViewTools>
          </StatusBar>

          <PageMenuList />
        </AppWindow>
      </Desktop>
    </>
  );
}

export default App;
